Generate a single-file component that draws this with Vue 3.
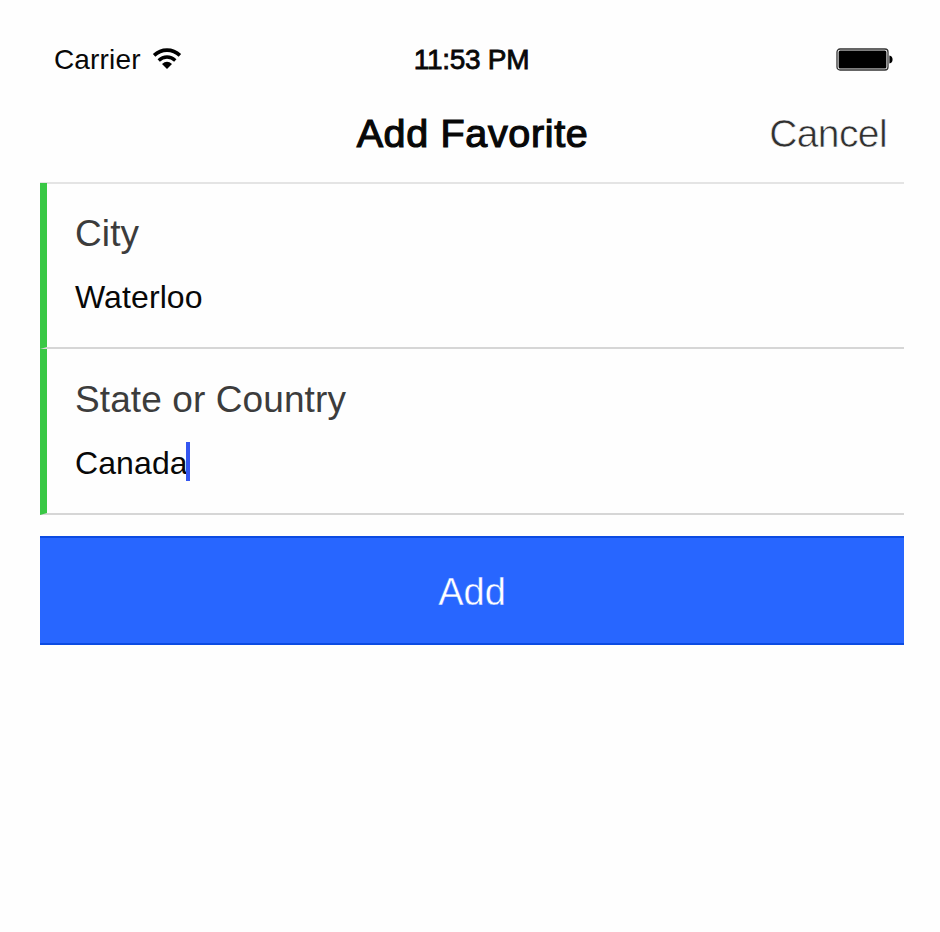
<script setup>
import { ref } from 'vue'

const fields = ref([
  { id: 'city', label: 'City', value: 'Waterloo', focused: false },
  { id: 'region', label: 'State or Country', value: 'Canada', focused: true },
])
</script>

<template>
  <main class="screen">
    <div class="status">
      <div class="carrier">
        <span>Carrier</span>
        <svg class="wifi" width="30" height="22" viewBox="0 0 30 22">
          <path d="M2.1 7.4C9.5 .4 20.5 .4 27.9 7.4" fill="none" stroke="#000" stroke-width="3.6" />
          <path d="M6.7 12.4C11.6 7.9 18.4 7.9 23.3 12.4" fill="none" stroke="#000" stroke-width="3.4" />
          <path d="M10 16.1Q15 11.6 20 16.1L15 21Z" fill="#000" />
        </svg>
      </div>
      <time class="time">11:53 PM</time>
      <svg class="battery" width="58" height="24" viewBox="0 0 58 24">
        <rect x="1" y="1" width="51" height="21" rx="3" fill="#fff" stroke="#333" stroke-width="1.3" />
        <rect x="2.6" y="2.6" width="47.8" height="17.8" rx="1.5" fill="#000" />
        <path d="M53.4 7.6C57.6 8 57.6 15.2 53.4 15.6Z" fill="#000" />
      </svg>
    </div>
    <header class="header">
      <h1 class="title">Add Favorite</h1>
      <a class="cancel">Cancel</a>
    </header>
    <form class="form">
      <label v-for="f in fields" :key="f.id" class="field">
        <span class="label">{{ f.label }}</span>
        <span class="value">{{ f.value }}<i v-if="f.focused" class="caret"></i></span>
      </label>
      <button type="button" class="add">Add</button>
    </form>
  </main>
</template>

<style>
body {
  background: #fefefe;
}
</style>

<style scoped>
.screen {
  box-sizing: border-box;
  width: 864px;
  margin-left: 40px;
  padding-top: 40px;
  font-family: "Liberation Sans", Arial, sans-serif;
  color: #080808;
}
.status {
  display: grid;
  grid-template-columns: 1fr auto 1fr;
  align-items: center;
  height: 40px;
  padding: 0 10px 0 14px;
  font-size: 28px;
}
.carrier {
  display: flex;
  align-items: center;
  gap: 11.5px;
  letter-spacing: 0.15px;
}
.wifi {
  margin-top: -2px;
}
.time {
  margin-right: 5px;
  letter-spacing: -0.3px;
  -webkit-text-stroke: 0.8px #080808;
}
.battery {
  justify-self: end;
}
.header {
  display: grid;
  grid-template-columns: 1fr auto 1fr;
  align-items: center;
  box-sizing: border-box;
  height: 104px;
  padding: 5px 17px 0;
  border-bottom: 2px solid #e4e4e4;
}
.title {
  grid-column: 2;
  margin: 0 0 0 1px;
  font-size: 39.5px;
  font-weight: 400;
  letter-spacing: 0.65px;
  -webkit-text-stroke: 1.2px #080808;
}
.cancel {
  justify-self: end;
  font-size: 39px;
  letter-spacing: -0.6px;
  color: #303030;
  -webkit-text-stroke: 0.6px #fefefe;
}
.form {
  margin-top: -1px;
}
.field {
  display: block;
  box-sizing: border-box;
  height: 166px;
  padding: 29px 28px 0;
  border-left: 7px solid #39c845;
  border-bottom: 2px solid #d6d6d6;
}
.label {
  display: block;
  font-size: 37px;
  line-height: 44px;
  letter-spacing: 0.1px;
  color: #3c3c3c;
}
.value {
  display: flex;
  align-items: center;
  margin-top: 21px;
  font-size: 32px;
  line-height: 40px;
  letter-spacing: 0.1px;
}
.caret {
  width: 4.5px;
  height: 39px;
  margin: -4px 0 0 -2px;
  background: #3456f0;
}
.add {
  display: block;
  box-sizing: border-box;
  width: 100%;
  height: 109px;
  margin-top: 21px;
  padding: 4px 0 0;
  border: 0 solid #0c4be2;
  border-width: 2px 0;
  background: #2866ff;
  color: #fff;
  font: inherit;
  font-size: 38px;
  -webkit-text-stroke: 0.4px #2866ff;
}
</style>
